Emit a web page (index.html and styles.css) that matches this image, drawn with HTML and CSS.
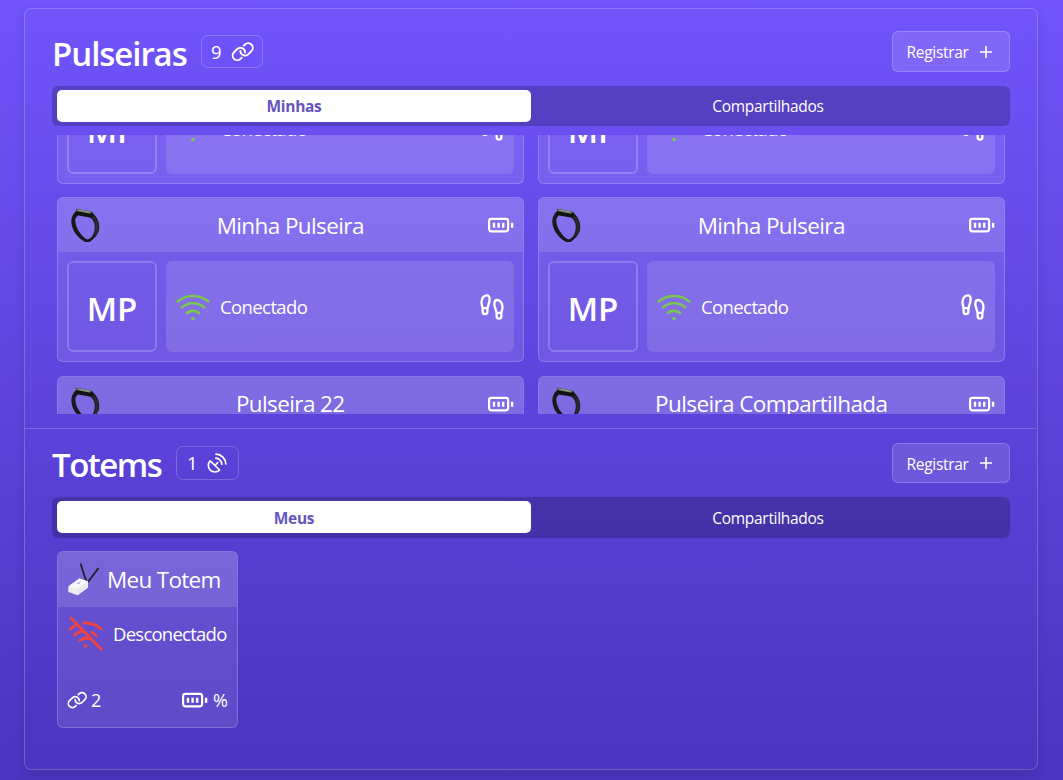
FILE: index.html
```html
<!DOCTYPE html>
<html lang="pt-BR">
<head>
<meta charset="utf-8">
<title>Pulseiras e Totems</title>
<link rel="stylesheet" href="styles.css">
</head>
<body>
<svg class="defs" width="0" height="0" aria-hidden="true">
  <symbol id="link" viewBox="0 0 24 24"><g fill="none" stroke="currentColor" stroke-width="1.8" stroke-linecap="round" transform="translate(.2 .2)"><path d="M9.750 11.200a4.450 4.450 0 0 0 7.500 3.300l3.100-3.100a4.450 4.450 0 0 0-6.300-6.300l-1 1"/><path d="M14.250 12.700a4.450 4.450 0 0 0-7.500-3.300l-3.100 3.100a4.450 4.450 0 0 0 6.300 6.300l1-1"/></g></symbol>
  <symbol id="plus" viewBox="0 0 14 14"><path fill="none" stroke="currentColor" stroke-width="1.6" d="M7 1v12M1 7h12"/></symbol>
  <symbol id="battery" viewBox="0 0 26 16"><g fill="none" stroke="currentColor"><rect x="1.100" y="1.900" width="19" height="12.400" rx="2.200" stroke-width="2.200"/><path stroke-width="2.400" d="M6 5.700v5M10.600 5.700v5M15.200 5.700v5M24.100 5.700v5"/></g></symbol>
  <symbol id="wifi" viewBox="0 0 34 28"><g fill="none" stroke="currentColor" stroke-width="2.7" stroke-linecap="round"><path d="M1.700 8.500a24 24 0 0 1 30.600 0M6 14.300a17 17 0 0 1 22 0M11 20a9.500 9.500 0 0 1 12 0"/></g><circle cx="17" cy="25.600" r="1.800" fill="currentColor"/></symbol>
  <symbol id="wifi-off" viewBox="0 0 36 36"><g fill="none" stroke="currentColor" stroke-width="3" stroke-linecap="round"><path d="M3 2l30 31M2.200 13a23 23 0 0 1 5.300-3.500M15.500 7a24 24 0 0 1 17.700 6M6.800 19a16 16 0 0 1 7-4M24 16.500a16 16 0 0 1 4.300 3M12 24.300a10 10 0 0 1 9.800-1.400"/></g><circle cx="17.500" cy="29.800" r="1.900" fill="currentColor"/></symbol>
  <symbol id="steps" viewBox="0 0 24 24"><g fill="none" stroke="currentColor" stroke-width="2" stroke-linecap="round" stroke-linejoin="round"><path d="M4 16v-2.380C4 11.500 2.970 10.500 3 8c.03-2.720 1.490-6 4.500-6C9.370 2 10 3.800 10 5.500c0 3.110-2 5.660-2 8.680V16a2 2 0 1 1-4 0Z"/><path d="M20 20v-2.380c0-2.120 1.030-3.120 1-5.620-.03-2.720-1.490-6-4.500-6C14.630 6 14 7.800 14 9.500c0 3.110 2 5.660 2 8.680V20a2 2 0 1 0 4 0ZM16 17h4M4 13h4"/></g></symbol>
  <symbol id="dish" viewBox="0 0 20 20"><g fill="none" stroke="currentColor" stroke-width="1.700" stroke-linecap="round" stroke-linejoin="round"><path d="M3.200 7.800a6.500 6.500 0 0 0 9.400 9.200ZM8 12.300l2.800-2.800M8.800 5.200a6.200 6.200 0 0 1 6 6M9 1.200a10 10 0 0 1 9.800 9.800"/></g></symbol>
  <symbol id="band" viewBox="0 0 28.500 34.500"><path fill="#18191b" fill-rule="evenodd" d="M5 3C1 7 0 11 .4 15c.6 5 2.600 9 5.300 12 3 3.500 6 6 9.300 7.300 2 .3 3 0 4-.6 2.500-2 5-4 6.700-6.700 2-3 2.800-5.500 2.600-8-.1-5.500-2.600-10.500-6.600-14ZM7 7.500c-2 1.500-2.700 3-2.700 4.500 0 2.500.4 4.700 1.400 7 1.200 3 2.800 5.500 5 8 1.800 2 3.500 3.500 5.800 4.500 1.800-.6 3-1.300 4.200-2.500 1.600-2.300 2.500-4.600 2.800-7 .5-2.700.4-4.800-.3-7-.8-2.300-2.200-4.500-4.200-5.500Z"/><path fill="#2b2c2e" d="M22.500 8c5 5 6.200 10 4 16-.8 2.200-2.200 4-4 5.400C25.300 22 25.500 15 21.500 9Z"/><path fill="#111214" d="m5 .8 16.700 3.400-.8 4.400-2.700.6L5 5.800Z"/><path fill="#66755e" d="m5.800.7 15 3.100-1.400 2L5 3Z"/><path fill="#93a586" d="m8 1.700 10.800 2.400-.8.8L7 2.600Z"/></symbol>
  <symbol id="router" viewBox="0 0 32 34"><path stroke="#222129" stroke-width="1.800" fill="none" d="m12.500.5 6 18.500M30.500 5 20 19"/><path fill="#ececf1" d="M.3 23.500 11.500 15.500l8.500 3v6L9.700 32.300.3 29Z"/><path fill="#f9f8fc" d="M.3 23.500 11.500 15.500l8.500 3-10.300 7.300Z"/><path fill="#e8e7ee" d="m9.700 25.800 10.300-7.300v6L9.700 32.300Z"/><path fill="#b3aaf0" d="m8.500 20.200 2.500-1.200 2 .8-2.600 1.300Z"/></symbol>
</svg>
<main class="panel">
  <section class="section section-bands">
    <header class="head">
      <h1 class="title title-bands">Pulseiras</h1>
      <span class="count">9 <svg class="i-link"><use href="#link"/></svg></span>
      <button class="register"><span>Registrar</span><svg class="i-plus"><use href="#plus"/></svg></button>
    </header>
    <nav class="tabs"><a class="tab active">Minhas</a><a class="tab">Compartilhados</a></nav>
    <div class="scroller"><div class="grid" id="bands"></div></div>
  </section>
  <section class="section section-totems">
    <header class="head">
      <h1 class="title title-totems">Totems</h1>
      <span class="count">1 <svg class="i-dish"><use href="#dish"/></svg></span>
      <button class="register"><span>Registrar</span><svg class="i-plus"><use href="#plus"/></svg></button>
    </header>
    <nav class="tabs"><a class="tab active">Meus</a><a class="tab">Compartilhados</a></nav>
    <article class="card totem">
      <header class="totem-head"><svg class="i-router"><use href="#router"/></svg><h2 class="name">Meu Totem</h2></header>
      <div class="totem-status"><svg class="i-off"><use href="#wifi-off"/></svg><span class="status">Desconectado</span></div>
      <footer class="totem-foot"><svg class="i-small-link"><use href="#link"/></svg><span>2</span><svg class="i-battery push"><use href="#battery"/></svg><span class="percent">%</span></footer>
    </article>
  </section>
</main>
<script src="cards.js"></script>
</body>
</html>
```
FILE: styles.css
```css
* { box-sizing: border-box; }
body {
  margin: 0;
  height: 780px;
  padding: 8px 25px 0 24px;
  overflow: hidden;
  color: #fff;
  font-family: "Open Sans", "Noto Sans", sans-serif;
  background: linear-gradient(#7154fb, #4b34be);
}
.defs { position: absolute; }
h1, h2 { margin: 0; }
svg { display: block; flex: none; }
.panel {
  height: 762px;
  border: 1px solid rgba(255,255,255,.2);
  border-radius: 7px;
  box-shadow: 0 4px 12px rgba(0,0,0,.1);
}
.section { padding: 0 27px; }
.section-bands { height: 420px; padding-top: 22px; border-bottom: 1px solid rgba(255,255,255,.2); }
.section-totems { padding-top: 14px; }
.head { display: flex; align-items: center; height: 41px; }
.section-totems .head { height: 40px; }
.title { font-size: 33px; line-height: 36px; font-weight: 600; padding-top: 4px; white-space: nowrap; }
.title-bands { width: 149px; letter-spacing: -1.05px; }
.title-totems { width: 124px; letter-spacing: -1.5px; }
.count {
  display: flex; align-items: center; justify-content: space-between;
  height: 33px; width: 62px; padding: 0 9px; line-height: 30px;
  border: 1px solid rgba(255,255,255,.2); border-radius: 7px;
  font-size: 18.5px;
}
.section-totems .count { width: 63px; height: 34px; padding-left: 10px; }
.i-link { width: 25px; height: 25px; margin-right: -2px; }
.i-dish { width: 20px; height: 20px; margin-right: 2px; }
.register {
  display: flex; align-items: center;
  width: 118px; height: 41px; margin-left: auto; padding: 0 16px 0 13.5px;
  justify-content: space-between;
  border: 1px solid rgba(255,255,255,.2); border-radius: 6px;
  background: rgba(255,255,255,.12); color: #fff;
  font-family: inherit; font-size: 15.5px; letter-spacing: -.3px;
}
.register span { padding-top: 1px; }
.section-totems .register { height: 40px; }
.i-plus { width: 14px; height: 14px; }
.tabs {
  display: flex; height: 40px; margin-top: 14px; padding: 4px 5px;
  border-radius: 6px; background: rgba(0,0,0,.2);
}
.section-totems .tabs { height: 41px; }
.tab { flex: 1; height: 32px; line-height: 33px; text-align: center; border-radius: 5px; font-size: 15.5px; letter-spacing: -.3px; }
.section-totems .tab { line-height: 35px; }
.tab.active { background: #fff; color: #6554c0; font-weight: 700; }
.scroller { height: 279px; margin-top: 9px; padding: 0 5px; overflow: hidden; }
.grid { display: grid; grid-template-columns: 1fr 1fr; gap: 13.6px 14px; margin-top: -116.4px; }
.card { border: 1px solid rgba(255,255,255,.2); border-radius: 6px; background: rgba(255,255,255,.1); overflow: hidden; }
.band { height: 165px; }
.band-head { display: flex; align-items: center; height: 54px; padding: 0 9px 0 13px; background: rgba(255,255,255,.12); }
.i-band { width: 28.5px; height: 34.5px; }
.name { flex: 1; font-size: 22.5px; line-height: 30px; font-weight: 400; text-align: center; letter-spacing: -.6px; white-space: nowrap; padding: 1px 7px 0 0; }
.i-battery { width: 26px; height: 16px; }
.band-body { display: flex; gap: 9px; padding: 9px; }
.initials {
  width: 90px; height: 91px; border: 2px solid rgba(255,255,255,.2); border-radius: 6px;
  font-size: 33px; line-height: 92px; font-weight: 600; text-align: center;
}
.info { flex: 1; display: flex; align-items: center; padding: 0 8px 0 10px; border-radius: 6px; background: rgba(255,255,255,.12); }
.i-wifi { width: 34px; height: 28px; color: #7ac74f; }
.status { font-size: 18.5px; letter-spacing: -.6px; margin-left: 10px; white-space: nowrap; }
.i-steps { width: 28px; height: 28px; margin-left: auto; }
.totem { width: 181px; height: 177px; margin: 13px 0 0 5px; }
.totem-head { display: flex; align-items: center; height: 55px; padding: 0 10px; background: rgba(255,255,255,.12); }
.i-router { width: 32px; height: 34px; }
.totem-head .name { text-align: left; margin-left: 7px; padding: 0; letter-spacing: -.7px; }
.totem-status { display: flex; align-items: center; height: 53px; padding-left: 10px; }
.i-off { width: 36px; height: 36px; color: #ef4444; }
.totem-status .status { margin-left: 9px; letter-spacing: -.75px; }
.totem-foot { display: flex; align-items: center; height: 26px; margin-top: 27px; padding: 0 9px 0 8px; font-size: 18px; }
.i-small-link { width: 22px; height: 22px; margin-right: 3px; }
.push { margin-left: auto; }
.percent { margin-left: 5px; }
```
FILE: cards.js
```js
const names = ["Minha Pulseira", "Minha Pulseira", "Minha Pulseira", "Minha Pulseira", "Pulseira 22", "Pulseira Compartilhada"];
const icon = (cls, id) => `<svg class="${cls}"><use href="#${id}"/></svg>`;
document.getElementById("bands").innerHTML = names.map(name => `
  <article class="card band">
    <header class="band-head">${icon("i-band", "band")}<h2 class="name">${name}</h2>${icon("i-battery", "battery")}</header>
    <div class="band-body">
      <div class="initials">MP</div>
      <div class="info">${icon("i-wifi", "wifi")}<span class="status">Conectado</span>${icon("i-steps", "steps")}</div>
    </div>
  </article>`).join("");
```
